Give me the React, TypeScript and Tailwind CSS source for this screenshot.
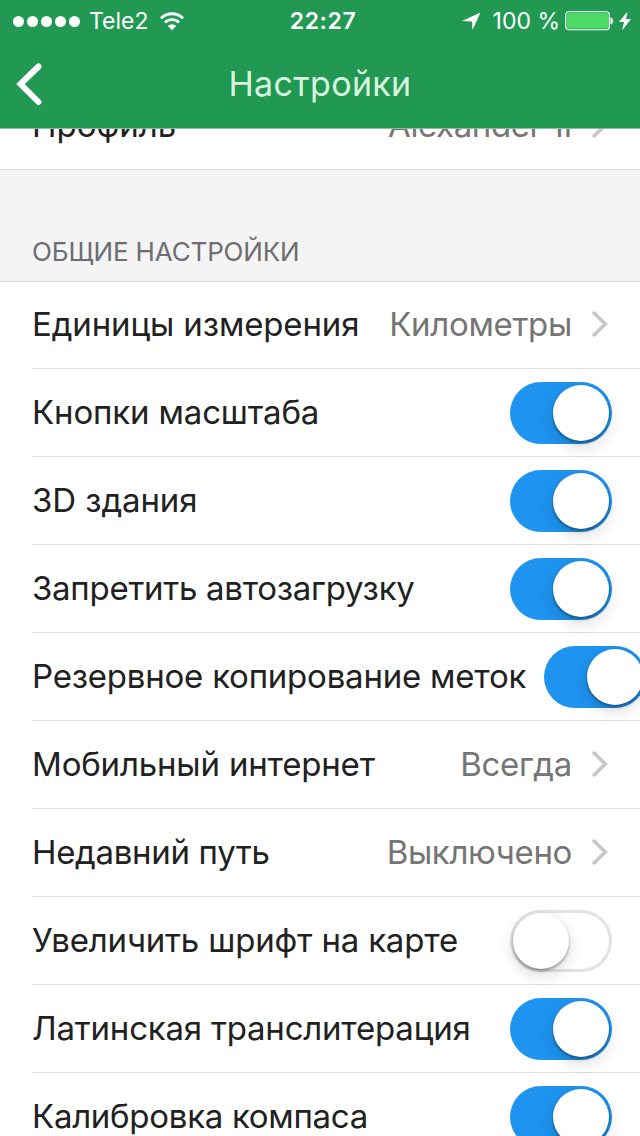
type Row = {
  label: string;
  labelClass?: string;
  value?: string;
  valueClass?: string;
  on?: boolean;
};

const rows: Row[] = [
  { label: "Единицы измерения", labelClass: "tracking-[-0.13px]", value: "Километры", valueClass: "tracking-[-0.3px]" },
  { label: "Кнопки масштаба", labelClass: "tracking-[-0.15px]", on: true },
  { label: "3D здания", labelClass: "tracking-[-0.1px]", on: true },
  { label: "Запретить автозагрузку", labelClass: "tracking-[-0.27px]", on: true },
  { label: "Резервное копирование меток", labelClass: "tracking-[-0.22px]", on: true },
  { label: "Мобильный интернет", labelClass: "tracking-[-0.18px]", value: "Всегда", valueClass: "tracking-[-0.25px]" },
  { label: "Недавний путь", labelClass: "tracking-[-0.32px]", value: "Выключено", valueClass: "tracking-[-0.35px]" },
  { label: "Увеличить шрифт на карте", labelClass: "tracking-[-0.18px]", on: false },
  { label: "Латинская транслитерация", labelClass: "tracking-[-0.2px]", on: true },
  { label: "Калибровка компаса", labelClass: "tracking-[-0.28px]", on: true },
];

const Chevron = () => (
  <svg width="17" height="28" viewBox="0 0 17 28" fill="none" className="mb-0.5 ml-5 mr-[31px] shrink-0">
    <path d="M2.2 3.2 13.2 14 2.2 24.8" stroke="#c7c7cc" strokeWidth="3.8" strokeLinecap="round" />
  </svg>
);

const Toggle = ({ on }: { on: boolean }) => (
  <div
    className={
      on
        ? "ml-[18px] mr-7 flex h-[62px] w-[102px] shrink-0 items-center justify-end rounded-full bg-[#1e93ef] p-[3px]"
        : "ml-[18px] mr-7 flex h-[62px] w-[102px] shrink-0 items-center rounded-full border-[3px] border-[#e3e3e3] bg-white"
    }
  >
    <div className="size-14 rounded-full bg-white shadow-[0_6px_16px_rgba(0,0,0,0.15),0_2px_3px_rgba(0,0,0,0.35)]" />
  </div>
);

const SettingsRow = ({ label, labelClass = "", value, valueClass = "", on }: Row) => (
  <div className="ml-8 flex h-[88px] items-center border-b border-[#dcdcde]">
    <span className={`mb-0.5 shrink-0 whitespace-nowrap text-[33px] leading-10 text-[#212121] ${labelClass}`}>{label}</span>
    <div className="grow" />
    {value !== undefined ? (
      <>
        <span className={`mb-0.5 whitespace-nowrap text-[33px] leading-10 text-[#757575] ${valueClass}`}>{value}</span>
        <Chevron />
      </>
    ) : (
      <Toggle on={!!on} />
    )}
  </div>
);

const StatusBar = () => (
  <div className="grid h-10 grid-cols-[1fr_auto_1fr] items-center pl-[13px] pr-[9px] pt-0.5 text-[23px] text-white">
    <div className="flex items-center">
      <div className="flex gap-[3px]">
        {[0, 1, 2, 3, 4].map((i) => (
          <span key={i} className="size-[11px] rounded-full bg-white" />
        ))}
      </div>
      <span className="ml-[9px]">Tele2</span>
      <svg width="26" height="20" viewBox="0 0 26 20" className="mb-px ml-[11px]" fill="none" stroke="white">
        <path d="M2 7.200a15.800 15.800 0 0 1 22 0" strokeWidth="2.800" />
        <path d="M6 11.600a9.900 9.900 0 0 1 14 0" strokeWidth="2.800" />
        <path d="M8.800 15a6 6 0 0 1 8.400 0L13 19.200z" fill="white" stroke="none" />
      </svg>
    </div>
    <span className="ml-0.5 font-semibold tracking-[0.6px]">22:27</span>
    <div className="flex items-center justify-end">
      <svg width="19" height="19" viewBox="0 0 19 19" fill="white">
        <path d="M18.500.5 10.500 18 10 9.500 0 9z" />
      </svg>
      <span className="ml-3 whitespace-nowrap">100 %</span>
      <svg width="48" height="20" viewBox="0 0 48 20" className="ml-[5px]">
        <rect x=".75" y=".75" width="43.500" height="18" rx="3" fill="none" stroke="white" strokeWidth="1.2" />
        <rect x="2" y="2" width="41" height="15.500" rx="1.500" fill="#4cd964" />
        <path d="M45.500 6.500c3.500.5 3.500 6.500 0 7z" fill="white" />
      </svg>
      <svg width="12" height="20" viewBox="0 0 12 20" fill="white" className="ml-[6px]">
        <path d="M8.500.5 0 11h5L3 19.500 12 8H7z" />
      </svg>
    </div>
  </div>
);

const App = () => (
  <div
    className="h-[1136px] w-[640px] overflow-hidden bg-white"
    style={{ fontFamily: 'Inter, "Liberation Sans", sans-serif' }}
  >
    <header className="relative z-10 h-[129px] border-b border-[#8fb9a0] bg-[#219952]">
      <StatusBar />
      <div className="grid h-[88px] grid-cols-[1fr_auto_1fr] items-center">
        <svg width="27" height="44" viewBox="0 0 27 44" className="ml-4" fill="none">
          <path d="M22.500 4.500 4.500 22 22.500 40" stroke="white" strokeWidth="6" strokeLinecap="round" />
        </svg>
        <h1 className="text-[34px] leading-10 tracking-[0.35px] text-[#d9f5e0]">Настройки</h1>
        <span />
      </div>
    </header>
    <main className="-mt-[47px]">
      <div className="-ml-8 border-b border-[#dcdcde] pl-8">
        <div className="-mb-px">
          <SettingsRow label="Профиль" value="Alexander-II" valueClass="tracking-[-0.4px]" />
        </div>
      </div>
      <h2 className="flex h-28 items-end border-b border-[#dcdcde] bg-[#f4f4f4] pb-[13px] pl-8 text-[26px] leading-8 tracking-[-0.15px] text-[#6d6d72]">
        ОБЩИЕ НАСТРОЙКИ
      </h2>
      <div className="-mt-px">
        {rows.map((row) => (
          <SettingsRow key={row.label} {...row} />
        ))}
      </div>
    </main>
  </div>
);

export default App;
